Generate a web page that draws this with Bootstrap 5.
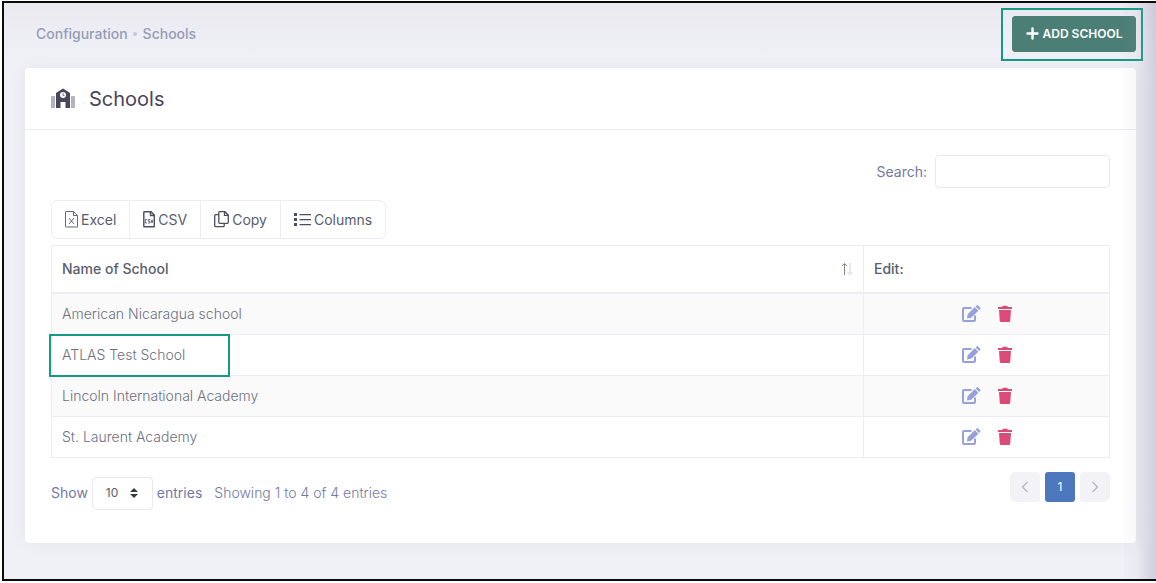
<!DOCTYPE html>
<html lang="en">
<head>
<meta charset="utf-8">
<meta name="viewport" content="width=device-width, initial-scale=1">
<title>Schools</title>
<link href="https://cdn.jsdelivr.net/npm/bootstrap@5.3.0/dist/css/bootstrap.min.css" rel="stylesheet">
<style>
  body { font-family: Inter, "Open Sans", sans-serif; font-size: 14px; line-height: 20px; color: #7479a3; background: #fff; padding: 1px 0 2px 2px; }
  .frame { min-height: calc(100vh - 3px); border: 2px solid #0b0b0d; border-right: 0; padding: 0 20px 30px 21px;
    background: linear-gradient(#eae9f0, #f0f1f7 60px); }
  .frame::after { content: ""; position: absolute; top: 0; right: 0; bottom: 0; width: 32px; pointer-events: none;
    background: linear-gradient(90deg, rgba(150,145,175,.03), rgba(150,145,175,.06) 35%, rgba(150,145,175,.36)); }
  .topbar { height: 65px; padding: 0 0 4px 11px; }
  .crumb, .crumb a { color: #959cb6; font-weight: 500; text-decoration: none; }
  .crumb i { width: 4px; height: 4px; background: #c4c6d9; margin: 0 6px 0 5px; }
  .add-btn { --bs-btn-bg: #4b7f76; --bs-btn-border-color: #4b7f76; --bs-btn-hover-bg: #3e6d65; --bs-btn-color: #fff; --bs-btn-hover-color: #fff;
    width: 124px; height: 36px; padding: 0; font-size: 12px; font-weight: 600; border-radius: 3px; }
  .callout-box { position: absolute; border: 2px solid #139b86; pointer-events: none; }
  .callout-add { inset: -8px -7px -9px -11px; }
  .callout-row { top: -1px; left: -3px; width: 181px; bottom: -2px; z-index: 1; }
  .panel { border: 0; border-radius: 4px; box-shadow: 0 0 16px rgba(82,63,105,.07); }
  .panel-head { height: 62px; border-bottom: 1px solid #ebedf2; padding: 0 26px; gap: 14px; color: #48465b; }
  .panel-head h1 { font-size: 20px; font-weight: 400; }
  .panel-body { padding: 25px 26px 33px; }
  .field { border: 1px solid #e6e8f0; border-radius: 4px; height: 33px; font-size: 12px; box-shadow: none; }
  .search { width: 175px; }
  .tools { margin: 12px 0 6px; }
  .tools .btn { --bs-btn-border-color: #ebedf2; --bs-btn-color: #595d6e; --bs-btn-hover-bg: #f5f6fa; --bs-btn-hover-border-color: #ebedf2; --bs-btn-hover-color: #48465b;
    padding: 0 13px; height: 39px; font-size: 14px; gap: 3px; }
  .schools { --bs-table-striped-bg: #fafafa; --bs-table-color: #6c7080; --bs-table-striped-color: #6c7080; border-color: #ebedf2; color: #6c7080; }
  .schools > :not(caption) > * > * { padding: 10px; }
  .schools th { font-weight: 500; color: #595d6e; height: 47px; vertical-align: middle; }
  .schools thead th { border-bottom-width: 2px; }
  .schools td { height: 41px; font-weight: 300; }
  .edit-col { width: 246px; }
  .act { padding: 0; border: 0; background: none; line-height: 0; }
  .table-foot { padding-top: 14px; }
  .length-row { padding-top: 5px; }
  .length { width: 61px; padding: 0 13px; color: #595d6e; appearance: none;
    background: #fff url("data:image/svg+xml,%3Csvg xmlns='http://www.w3.org/2000/svg' viewBox='0 0 8 10'%3E%3Cpath fill='%23343a40' d='M4 0 0 4h8zM4 10 0 6h8z'/%3E%3C/svg%3E") no-repeat right 14px center / 8px 10px; }
  .pager { gap: 5px; }
  .pager .page-link { width: 30px; height: 30px; margin: 0; padding: 0; border: 0; border-radius: 3px; background: #f2f2f7; color: #b2b2be; font-size: 12px; }
  .pager .page-item .page-link { margin-left: 0; }
  .pager .active .page-link { background: #4c77bd; color: #fff; }
</style>
</head>
<body>
<svg class="d-none" xmlns="http://www.w3.org/2000/svg">
  <symbol id="pen" viewBox="0 0 20 18"><path fill="none" stroke="#98a0da" stroke-width="2" d="M10.500 3H3q-1 0-1 1v11q0 1 1 1h10q1 0 1-1v-4.500"/><path fill="#98a0da" d="m6 13.500.6-4.300 7.200-7.100 3.600 3.600-7.200 7.100zM14.600 1.400l1-1q.7-.7 1.400 0l2.100 2.100q.7.700 0 1.400l-1 1z"/></symbol>
  <symbol id="bin" viewBox="0 0 16 18"><path fill="#da4b78" d="M1 2h4l1-1.200h4L11 2h4v2H1zM2 5h12l-.8 11q-.1 1-1.200 1H4q-1.100 0-1.200-1z"/></symbol>
</svg>
<div class="frame position-relative">
  <header class="topbar d-flex align-items-center justify-content-between">
    <nav class="crumb d-flex align-items-center" aria-label="Breadcrumb">
      <a href="#">Configuration</a><i class="rounded-circle"></i><a href="#">Schools</a>
    </nav>
    <div class="position-relative">
      <button type="button" class="btn add-btn d-flex align-items-center justify-content-center gap-1">
        <svg width="13" height="13" viewBox="0 0 13 13"><path stroke="#fff" stroke-width="2.400" stroke-linecap="round" d="M6.500 1.500v10M1.500 6.500h10"/></svg>ADD SCHOOL
      </button>
      <span class="callout-box callout-add"></span>
    </div>
  </header>

  <main class="card panel">
    <div class="panel-head d-flex align-items-center">
      <svg width="24" height="22" viewBox="0 0 24 22"><path fill="#b4b3bd" d="M0 9q0-1 1-1h3v12H0zM20 8h3q1 0 1 1v11h-4z"/><path fill="#48465b" fill-rule="evenodd" d="M5 5l7-4.500L19 5v15h-4.500v-6h-5v6H5zM12 4a3 3 0 1 0 0 6 3 3 0 0 0 0-6z"/><path fill="none" stroke="#77758a" d="M12 5v2.500h1.500"/></svg>
      <h1 class="mb-0">Schools</h1>
    </div>
    <div class="panel-body">
      <div class="d-flex justify-content-end align-items-center gap-2">
        <label for="search">Search:</label>
        <input id="search" type="search" class="form-control field search">
      </div>

      <div class="btn-group tools" role="group" aria-label="Table tools">
        <button type="button" class="btn d-flex align-items-center">
          <svg width="13" height="17" viewBox="0 0 13 17" fill="none" stroke="#656879"><path d="M1 .5h7.500l4 4v11.500H1q-.5 0-.5-.5V1Q.5.500 1 .5zM8.500.500v4h4M4 7l5 6M9 7l-5 6"/></svg>Excel
        </button>
        <button type="button" class="btn d-flex align-items-center">
          <svg width="12" height="17" viewBox="0 0 12 17" fill="none" stroke="#4b4d60"><path stroke-width="1.400" d="M1.500.800H8l3.300 3.300v11.200q0 .5-.5.500H1.300q-.5 0-.5-.5V1.500q0-.7.7-.7zM7.500 1v3.500h3.700"/><path stroke-width=".8" d="M4 8.500H2.300v3.500H4M7 8.500H5.200v1.700H7V12H5M8 8.500l1 3.500 1-3.500"/></svg>CSV
        </button>
        <button type="button" class="btn d-flex align-items-center">
          <svg width="15" height="17" viewBox="0 0 15 17" fill="none" stroke="#4b4d60" stroke-width="1.300"><path d="M5.500.700H11L14.300 4v7.300q0 1-1 1h-7.500q-1 0-1-1V1.500q0-.8.700-.8zM10.500.700v3.600h3.700M4.500 3.700H1.700q-1 0-1 1v10q0 1 1 1h7.500q1 0 1-1v-2.200"/></svg>Copy
        </button>
        <button type="button" class="btn d-flex align-items-center">
          <svg width="17" height="15" viewBox="0 0 17 15"><path fill="#4b4d60" d="M0 1h3v3H0zM0 6h3v3H0zM0 11h3v3H0zM5.500 2H17v1.200H5.500zM5.500 7H17v1.200H5.500zM5.500 12H17v1.200H5.500z"/></svg>Columns
        </button>
      </div>

      <table class="table table-bordered table-striped schools mb-0 align-middle">
        <thead>
          <tr>
            <th scope="col"><div class="d-flex justify-content-between align-items-center">Name of School
              <svg width="14" height="14" viewBox="0 0 14 14" fill="none"><path stroke="#8c8279" d="M5.500 13V1.500M3 4l2.500-2.500L8 4"/><path stroke="#d3d3da" d="M11 1v11.500M8.500 10l2.500 2.500 2.500-2.500"/></svg></div></th>
            <th scope="col" class="edit-col">Edit:</th>
          </tr>
        </thead>
        <tbody>
          <tr><td>American Nicaragua school</td>
            <td><div class="d-flex justify-content-center gap-3"><button class="act" type="button" aria-label="Edit"><svg width="20" height="18"><use href="#pen"/></svg></button><button class="act" type="button" aria-label="Delete"><svg width="16" height="18"><use href="#bin"/></svg></button></div></td></tr>
          <tr><td class="position-relative">ATLAS Test School<span class="callout-box callout-row"></span></td>
            <td><div class="d-flex justify-content-center gap-3"><button class="act" type="button" aria-label="Edit"><svg width="20" height="18"><use href="#pen"/></svg></button><button class="act" type="button" aria-label="Delete"><svg width="16" height="18"><use href="#bin"/></svg></button></div></td></tr>
          <tr><td>Lincoln International Academy</td>
            <td><div class="d-flex justify-content-center gap-3"><button class="act" type="button" aria-label="Edit"><svg width="20" height="18"><use href="#pen"/></svg></button><button class="act" type="button" aria-label="Delete"><svg width="16" height="18"><use href="#bin"/></svg></button></div></td></tr>
          <tr><td>St. Laurent Academy</td>
            <td><div class="d-flex justify-content-center gap-3"><button class="act" type="button" aria-label="Edit"><svg width="20" height="18"><use href="#pen"/></svg></button><button class="act" type="button" aria-label="Delete"><svg width="16" height="18"><use href="#bin"/></svg></button></div></td></tr>
        </tbody>
      </table>

      <div class="table-foot d-flex justify-content-between align-items-start">
        <div class="length-row d-flex align-items-center gap-1">
          <label for="length">Show</label>
          <select id="length" class="field length"><option>10</option><option>25</option><option>50</option></select>
          <label for="length">entries</label>
          <span class="ms-2 fw-light">Showing 1 to 4 of 4 entries</span>
        </div>
        <ul class="pagination pager mb-0">
          <li class="page-item"><a class="page-link d-flex align-items-center justify-content-center" href="#" aria-label="Previous"><svg width="8" height="12" viewBox="0 0 8 12" fill="none" stroke="currentColor" stroke-width="1.200"><path d="M6.500 1 1.500 6l5 5"/></svg></a></li>
          <li class="page-item active"><a class="page-link d-flex align-items-center justify-content-center" href="#">1</a></li>
          <li class="page-item"><a class="page-link d-flex align-items-center justify-content-center" href="#" aria-label="Next"><svg width="8" height="12" viewBox="0 0 8 12" fill="none" stroke="currentColor" stroke-width="1.200"><path d="m1.500 1 5 5-5 5"/></svg></a></li>
        </ul>
      </div>
    </div>
  </main>
</div>
<script src="https://cdn.jsdelivr.net/npm/bootstrap@5.3.0/dist/js/bootstrap.bundle.min.js"></script>
</body>
</html>
